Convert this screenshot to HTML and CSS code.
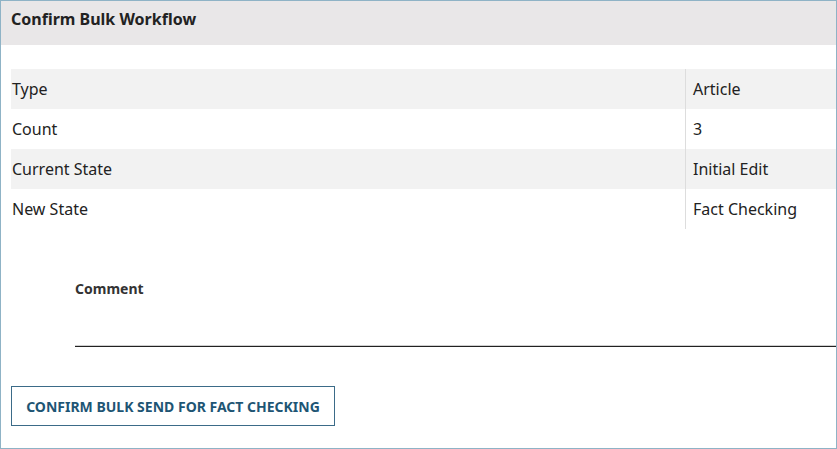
FILE: index.html
```html
<!DOCTYPE html>
<html lang="en">
<head>
<meta charset="utf-8">
<title>Confirm Bulk Workflow</title>
<link rel="stylesheet" href="styles.css">
</head>
<body>
<div class="panel">
  <div class="panel-header">
    <h1 class="panel-title">Confirm Bulk Workflow</h1>
  </div>
  <div class="panel-body">
    <table class="summary">
      <tr class="row-alt"><td class="label">Type</td><td class="value">Article</td></tr>
      <tr><td class="label">Count</td><td class="value">3</td></tr>
      <tr class="row-alt"><td class="label">Current State</td><td class="value">Initial Edit</td></tr>
      <tr><td class="label">New State</td><td class="value">Fact Checking</td></tr>
    </table>
    <div class="field">
      <label class="field-label" for="comment">Comment</label>
      <input class="field-input" id="comment" type="text">
    </div>
    <button class="confirm-btn" type="button">Confirm Bulk Send for Fact Checking</button>
  </div>
</div>
</body>
</html>
```
FILE: styles.css
```css
html, body {
  margin: 0;
  padding: 0;
  background: #ffffff;
}
body {
  font-family: "Noto Sans", "Open Sans", sans-serif;
  color: #222222;
}
.panel {
  box-sizing: border-box;
  width: 837px;
  height: 449px;
  border: 1px solid #8fb3c6;
  overflow: hidden;
}
.panel-header {
  background: #e9e7e8;
  height: 44px;
  padding: 7px 0 0 10px;
  box-sizing: border-box;
}
.panel-title {
  margin: 0;
  font-size: 16px;
  line-height: 22px;
  font-weight: 700;
  color: #222222;
}
.panel-body {
  padding: 24px 0 0 10px;
}
.summary {
  width: 100%;
  border-collapse: collapse;
  font-size: 16px;
}
.summary td {
  height: 40px;
  padding: 0;
  vertical-align: middle;
  line-height: 22px;
}
.summary .label {
  width: 673px;
  padding-left: 1px;
  border-right: 1px solid #dddddd;
}
.summary .value {
  padding-left: 7px;
}
.row-alt {
  background: #f2f2f2;
}
.field {
  margin: 50px 0 0 64px;
  display: flex;
  flex-direction: column;
}
.field-label {
  font-size: 14px;
  font-weight: 700;
  line-height: 20px;
  color: #333333;
}
.field-input {
  border: none;
  border-bottom: 1px solid #cfcfcf;
  box-shadow: 0 1px 0 #222222;
  height: 45px;
  padding: 0;
  margin-top: 1px;
  outline: none;
  background: transparent;
  font: inherit;
}
.confirm-btn {
  display: block;
  margin-top: 40px;
  width: 324px;
  height: 40px;
  box-sizing: border-box;
  background: #ffffff;
  border: 1px solid #3b6b88;
  color: #1e5574;
  font-family: "Noto Sans", "Open Sans", sans-serif;
  font-weight: 700;
  font-size: 14px;
  text-transform: uppercase;
  letter-spacing: 0;
  padding: 0;
  cursor: pointer;
}
```
